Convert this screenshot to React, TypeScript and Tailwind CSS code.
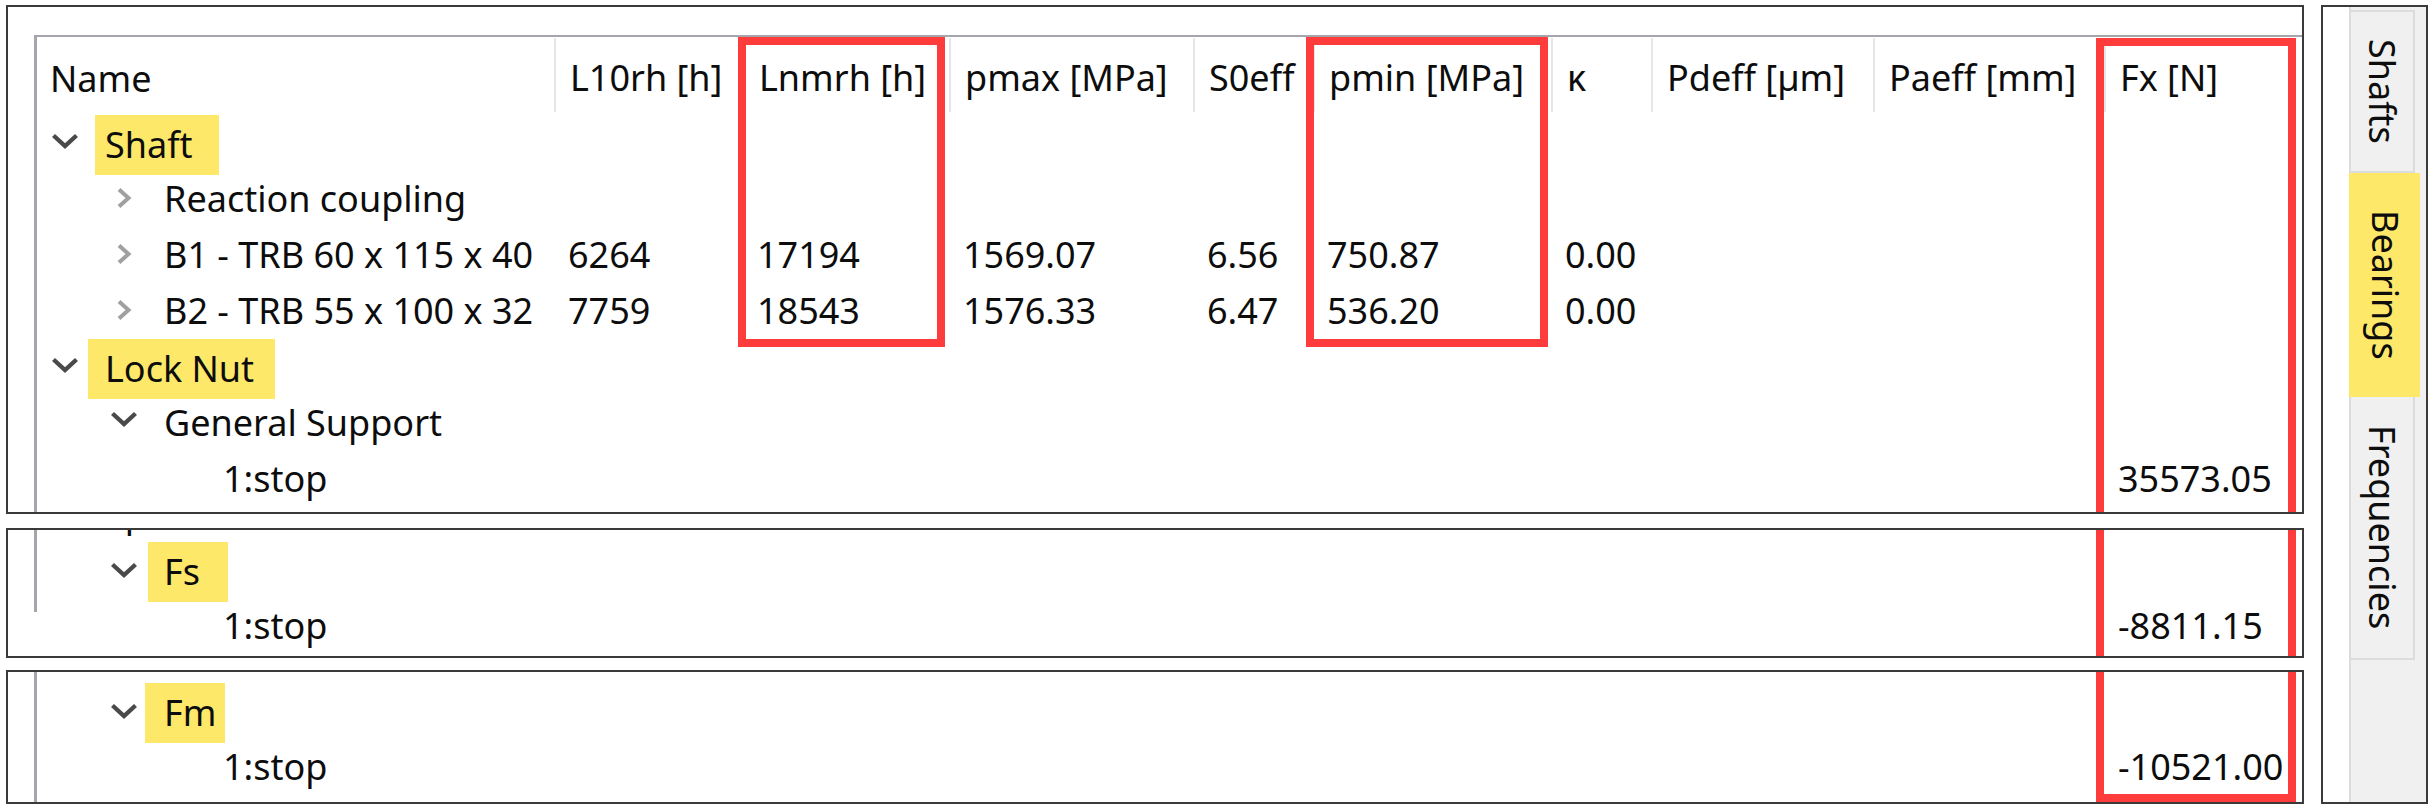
import React from "react";

const COLS =
  "grid grid-cols-[517px_189px_206px_244px_120px_238px_100px_222px_231px_220px]";

const HEADERS = [
  "Name",
  "L10rh [h]",
  "Lnmrh [h]",
  "pmax [MPa]",
  "S0eff",
  "pmin [MPa]",
  "κ",
  "Pdeff [µm]",
  "Paeff [mm]",
  "Fx [N]",
];

type Row = {
  level: 0 | 1 | 2;
  chev?: "down" | "right";
  label: string;
  hl?: string;
  cells?: string[];
};

const INDENT: Record<number, string> = {
  0: "pl-[13px]",
  1: "pl-[72px]",
  2: "pl-[131px]",
};

function ChevronDown() {
  return (
    <svg width="28" height="16" viewBox="0 0 28 16" className="ml-[1px] mb-[8px]">
      <polyline
        points="2.5,2.5 14,13 25.5,2.5"
        fill="none"
        stroke="#4a4a4a"
        strokeWidth="4.4"
        strokeLinecap="butt"
        strokeLinejoin="miter"
      />
    </svg>
  );
}

function ChevronRight() {
  return (
    <svg width="18" height="22" viewBox="0 0 18 22" className="ml-[6px] mb-[2px]">
      <polyline
        points="4,2.5 13.5,11 4,19.5"
        fill="none"
        stroke="#a0a0a0"
        strokeWidth="4"
        strokeLinecap="butt"
        strokeLinejoin="miter"
      />
    </svg>
  );
}

function TreeRow({ row }: { row: Row }) {
  const cells = row.cells ?? [];
  return (
    <div className={`${COLS} h-[56px] items-center`}>
      <div className={`flex items-center h-full whitespace-nowrap ${INDENT[row.level]}`}>
        <div className="w-[55px] shrink-0 flex items-center">
          {row.chev === "down" && <ChevronDown />}
          {row.chev === "right" && <ChevronRight />}
        </div>
        {row.hl ? (
          <span className={`flex items-center h-[60px] bg-[#fde86a] ${row.hl}`}>{row.label}</span>
        ) : (
          <span>{row.label}</span>
        )}
      </div>
      {Array.from({ length: 9 }).map((_, i) => (
        <div key={i} className="pl-[14px] whitespace-nowrap">
          {cells[i] ?? ""}
        </div>
      ))}
    </div>
  );
}

const PANEL1: Row[] = [
  { level: 0, chev: "down", label: "Shaft", hl: "-ml-[10px] pl-[10px] w-[124px]" },
  { level: 1, chev: "right", label: "Reaction coupling" },
  {
    level: 1,
    chev: "right",
    label: "B1 - TRB 60 x 115 x 40",
    cells: ["6264", "17194", "1569.07", "6.56", "750.87", "0.00"],
  },
  {
    level: 1,
    chev: "right",
    label: "B2 - TRB 55 x 100 x 32",
    cells: ["7759", "18543", "1576.33", "6.47", "536.20", "0.00"],
  },
  { level: 0, chev: "down", label: "Lock Nut", hl: "-ml-[17px] pl-[17px] w-[187px]" },
  { level: 1, chev: "down", label: "General Support" },
  { level: 2, label: "1:stop", cells: ["", "", "", "", "", "", "", "", "35573.05"] },
];

const PANEL2: Row[] = [
  { level: 0, label: "Speed" },
  { level: 1, chev: "down", label: "Fs", hl: "-ml-[16px] pl-[16px] w-[80px] mb-[4px]" },
  { level: 2, label: "1:stop", cells: ["", "", "", "", "", "", "", "", "-8811.15"] },
];

const PANEL3: Row[] = [
  { level: 1, chev: "down", label: "Fm", hl: "-ml-[19px] pl-[19px] w-[80px] mb-[4px]" },
  { level: 2, label: "1:stop", cells: ["", "", "", "", "", "", "", "", "-10521.00"] },
];

export default function App() {
  return (
    <div className="w-[2434px] h-[809px] bg-white flex font-['Noto_Sans',sans-serif] text-[36px] leading-none text-[#0d0d0d] overflow-hidden">
      {/* Left: table clips */}
      <div className="w-[2304px] pl-[6px] pt-[5px] flex flex-col shrink-0">
        {/* Panel 1 */}
        <div className="relative h-[509px] border-2 border-[#3a3a3a] overflow-hidden pt-[28px]">
          <div className="ml-[26px] h-full border-l-[3px] border-t-2 border-[#a4a6ab]">
            <div className={`${COLS} h-[78px] pt-[6px]`}>
              {HEADERS.map((h, i) => (
                <div
                  key={h}
                  className={
                    i === 0
                      ? "flex items-center pl-[13px] whitespace-nowrap"
                      : "flex items-center pl-[14px] whitespace-nowrap border-l-2 border-[#e6e6e6] -mt-[5px] pt-[5px] mb-[3px]"
                  }
                >
                  {h}
                </div>
              ))}
            </div>
            {PANEL1.map((r, i) => (
              <TreeRow key={i} row={r} />
            ))}
          </div>
          {/* annotation boxes */}
          <div className="absolute left-[730px] top-[30px] w-[207px] h-[310px] border-[8px] border-[#fe3c3c]" />
          <div className="absolute left-[1298px] top-[30px] w-[242px] h-[310px] border-[8px] border-[#fe3c3c]" />
          <div className="absolute left-[2088px] top-[31px] w-[200px] h-[600px] border-[8px] border-[#fe3c3c]" />
        </div>

        {/* Panel 2 */}
        <div className="relative mt-[14px] h-[130px] border-2 border-[#3a3a3a] overflow-hidden">
          <div className="ml-[26px] h-full border-l-[3px] border-[#a4a6ab]">
            <div className="-mt-[44px]">
              {PANEL2.map((r, i) => (
                <TreeRow key={i} row={r} />
              ))}
            </div>
          </div>
          <div className="absolute left-[2088px] top-0 bottom-0 w-[200px] border-x-[8px] border-[#fe3c3c]" />
        </div>

        {/* Panel 3 */}
        <div className="relative mt-[12px] h-[134px] border-2 border-[#3a3a3a] overflow-hidden">
          <div className="ml-[26px] h-full border-l-[3px] border-[#a4a6ab] pt-[11px]">
            {PANEL3.map((r, i) => (
              <TreeRow key={i} row={r} />
            ))}
          </div>
          <div className="absolute left-[2088px] top-0 bottom-0 w-[200px] border-x-[8px] border-b-[8px] border-[#fe3c3c]" />
        </div>
      </div>

      {/* Right: vertical tabs */}
      <div className="ml-[17px] mt-[5px] w-[107px] h-[799px] border-2 border-[#3a3a3a] flex shrink-0">
        <div className="w-[26px] bg-white" />
        <div className="flex-1 bg-[#f0f0f0] border-l-2 border-[#dcdcdc] flex flex-col pt-[3px]">
          <div className="w-[64px] h-[163px] border-2 border-l-0 border-[#dcdcdc] flex items-center justify-center">
            <span className="[writing-mode:vertical-rl]">Shafts</span>
          </div>
          <div className="-ml-[2px] w-[71px] h-[224px] bg-[#fde86a] flex items-center justify-center">
            <span className="[writing-mode:vertical-rl]">Bearings</span>
          </div>
          <div className="w-[64px] h-[263px] border-2 border-t-0 border-l-0 border-[#dcdcdc] flex items-center justify-center">
            <span className="[writing-mode:vertical-rl]">Frequencies</span>
          </div>
        </div>
      </div>
    </div>
  );
}
